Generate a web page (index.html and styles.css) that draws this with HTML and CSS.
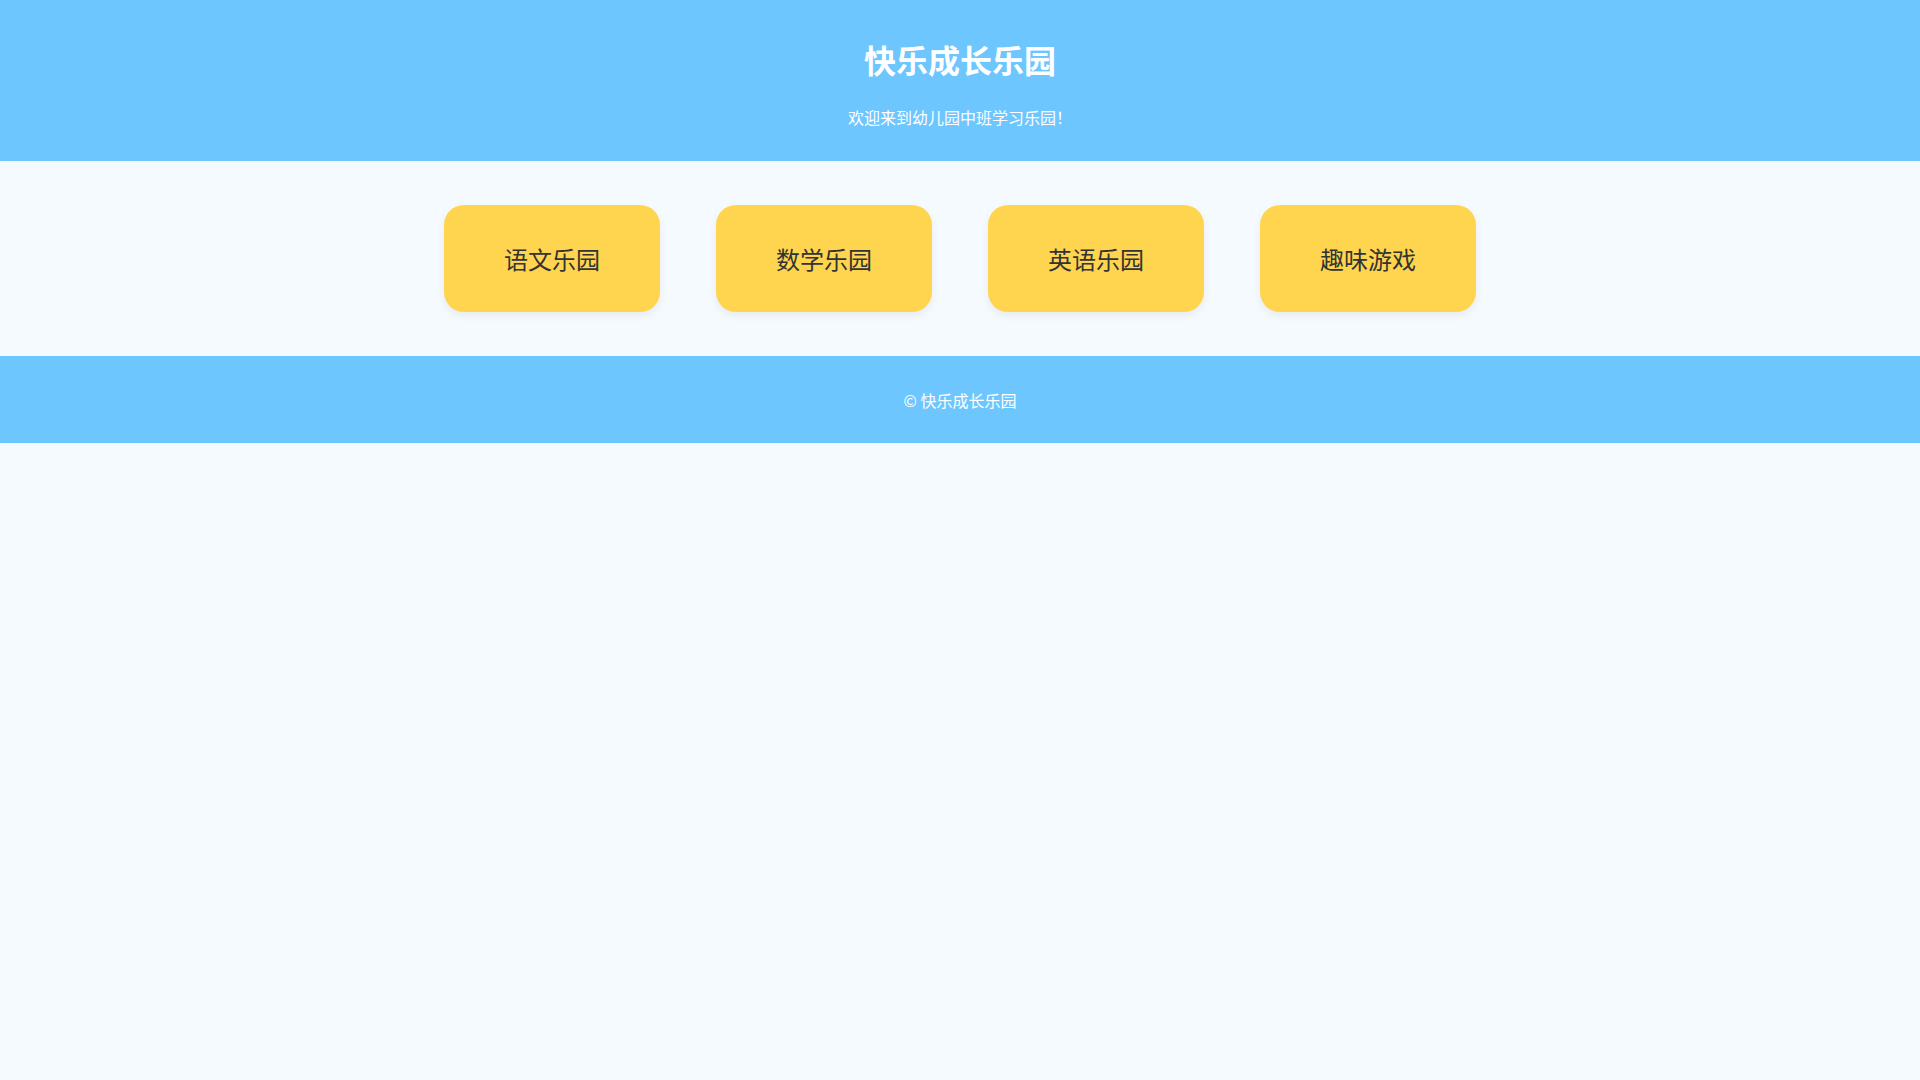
FILE: index.html
```html
<!DOCTYPE html>
<html lang="zh-CN">
<head>
    <meta charset="UTF-8">
    <meta name="viewport" content="width=device-width, initial-scale=1.0">
    <title>快乐成长乐园</title>
    <link rel="stylesheet" href="styles.css">
</head>
<body>
    <div class="header">
        <h1>快乐成长乐园</h1>
        <p>欢迎来到幼儿园中班学习乐园！</p>
    </div>
    <div class="menu">
        <div class="menu-btn">语文乐园</div>
        <div class="menu-btn">数学乐园</div>
        <div class="menu-btn">英语乐园</div>
        <div class="menu-btn">趣味游戏</div>
    </div>
    <div class="footer">© 快乐成长乐园</div>
</body>
</html>
```

FILE: styles.css
```css
body {
    margin: 0;
    font-family: "Noto Sans CJK SC", "Noto Sans", sans-serif;
    background-color: #f5faff;
    text-align: center;
}
.header {
    background-color: #6ec6ff;
    color: white;
    padding: 20px 0;
    height: 121px;
}
.header h1 {
    font-size: 32px;
    line-height: 48px;
    margin: 15px 0 22px;
}
.header p {
    font-size: 16px;
    line-height: 24px;
    margin: 0;
}
.menu {
    display: flex;
    justify-content: center;
    gap: 56px;
    padding: 44px 0;
}
.menu-btn {
    width: 216px;
    height: 107px;
    line-height: 107px;
    background-color: #ffd54f;
    color: #333;
    font-size: 24px;
    border-radius: 20px;
    box-shadow: 0 4px 8px rgba(0,0,0,0.06);
    cursor: pointer;
}
.footer {
    background-color: #6ec6ff;
    color: white;
    font-size: 16px;
    height: 87px;
    line-height: 88px;
}
```
